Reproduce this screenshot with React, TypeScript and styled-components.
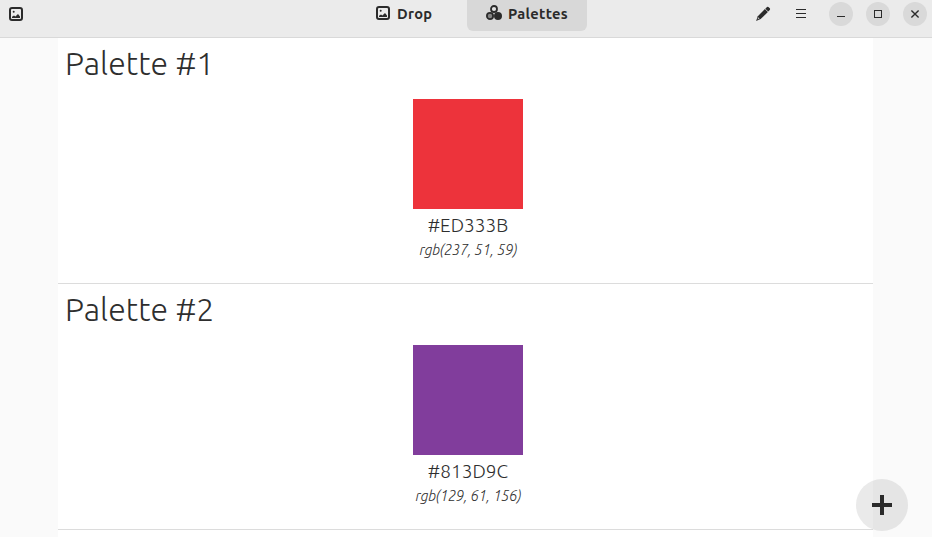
import React from 'react';
import styled, { createGlobalStyle } from 'styled-components';

const GlobalStyle = createGlobalStyle`
  * { box-sizing: border-box; }
  body {
    margin: 0;
    overflow: hidden;
    background: #fafafa;
    color: #2e2e2e;
    font-family: Ubuntu, "Open Sans", "Noto Sans", sans-serif;
  }
`;

const Window = styled.div`
  height: 537px;
  display: flex;
  flex-direction: column;
  overflow: hidden;
`;

const HeaderBar = styled.header`
  flex: none;
  height: 38px;
  display: grid;
  grid-template-columns: 347px 240px 1fr;
  align-items: start;
  background: #ebebeb;
  border-bottom: 1px solid #d9d9d9;
`;

const AppIcon = styled.div`
  display: flex;
  padding: 6px 8px;
`;

const Switcher = styled.nav`
  display: flex;
`;

const Tab = styled.button<{ $active?: boolean }>`
  width: 120px;
  height: 31px;
  display: flex;
  align-items: center;
  gap: 6px;
  border: 0;
  padding: 0 0 4px ${(p) => (p.$active ? 19 : 28)}px;
  border-radius: 0 0 6px 6px;
  background: ${(p) => (p.$active ? '#d8d8d8' : 'transparent')};
  color: #2b2b2b;
  font: 700 14.67px/20px Ubuntu, "Open Sans", "Noto Sans", sans-serif;
  letter-spacing: 0.3px;
  & > svg { margin-bottom: 2px; }
`;

const Actions = styled.div`
  display: flex;
  justify-content: flex-end;
  padding: 2px 5px 0 0;
`;

const ToolButton = styled.button`
  width: 24px;
  height: 24px;
  display: grid;
  place-items: center;
  border: 0;
  padding: 0;
  margin-right: 14px;
  background: transparent;
`;

const WindowButton = styled(ToolButton)`
  margin: 0 0 0 13px;
  border-radius: 50%;
  background: #d9d9d9;
  &:first-of-type { margin-left: 0; }
`;

const WindowControls = styled.div`
  display: flex;
  margin-left: 2px;
`;

const PaletteList = styled.main`
  flex: none;
  width: 815px;
  margin-left: 58px;
  height: 499px;
  overflow: hidden;
  background: #fff;
`;

const PaletteRow = styled.section`
  height: 246px;
  border-bottom: 1px solid #dcdcdc;
`;

const Title = styled.h2`
  margin: 0;
  padding: 4px 0 0 7px;
  height: 61px;
  font-size: 32px;
  font-weight: 300;
  line-height: 42px;
  letter-spacing: 0.06px;
`;

const ColorCard = styled.div`
  display: flex;
  flex-direction: column;
  align-items: center;
  padding-left: 5px;
`;

const Swatch = styled.div<{ $color: string }>`
  width: 110px;
  height: 110px;
  background: ${(p) => p.$color};
`;

const HexValue = styled.div`
  margin-top: 3px;
  font-size: 19px;
  font-weight: 300;
  line-height: 26px;
  letter-spacing: 0.05px;
  white-space: nowrap;
`;

const RgbValue = styled.div`
  margin-top: 1px;
  padding-left: 1px;
  font-size: 14.4px;
  font-style: italic;
  font-weight: 300;
  line-height: 22px;
  letter-spacing: -0.14px;
  white-space: nowrap;
`;

const AddButton = styled.button`
  position: absolute;
  left: 856px;
  top: 479px;
  width: 52px;
  height: 52px;
  display: grid;
  place-items: center;
  border: 0;
  padding: 0;
  border-radius: 50%;
  background: rgba(46, 46, 46, 0.1);
`;

const ImageIcon = () => (
  <svg width="16" height="16" viewBox="0 0 16 16" fill="#2b2b2b">
    <rect x="2" y="2" width="12" height="12" rx="2" fill="none" stroke="#2b2b2b" strokeWidth="2" />
    <circle cx="5.7" cy="5.8" r="1" />
    <path d="M4 12V10.8L6 9.4l1.4 1.2L10 8l2 2.4V12z" />
  </svg>
);

const PaletteIcon = () => (
  <svg width="16" height="16" viewBox="0 0 16 16" stroke="#2b2b2b" strokeWidth="1.8">
    <circle cx="8" cy="4" r="3" fill="#e2e2e2" />
    <circle cx="4" cy="11" r="3.1" fill="#858585" />
    <circle cx="12" cy="11" r="3.1" fill="#2b2b2b" />
  </svg>
);

const PencilIcon = () => (
  <svg width="16" height="16" viewBox="0 0 16 16" fill="#2b2b2b">
    <path d="M10.3 2.7 12 1.1Q12.9.4 13.7 1.2L14.8 2.3Q15.5 3.1 14.8 3.9L13.2 5.5z" />
    <path d="M9.9 3 12.9 6 5.7 13 1.1 15.1 2.8 10.2z" />
    <path d="M3.3 11.3 4.6 12.6 2.5 13.5z" fill="#bdbdbd" />
  </svg>
);

const palettes = [
  { name: 'Palette #1', hex: '#ED333B', rgb: 'rgb(237, 51, 59)' },
  { name: 'Palette #2', hex: '#813D9C', rgb: 'rgb(129, 61, 156)' },
];

export default function App() {
  return (
    <Window>
      <GlobalStyle />
      <HeaderBar>
        <AppIcon><ImageIcon /></AppIcon>
        <Switcher>
          <Tab><ImageIcon />Drop</Tab>
          <Tab $active><PaletteIcon />Palettes</Tab>
        </Switcher>
        <Actions>
          <ToolButton aria-label="Edit"><PencilIcon /></ToolButton>
          <ToolButton aria-label="Menu">
            <svg width="16" height="16" fill="#2b2b2b">
              <path d="M3 3h10v1H3zM3 7h10v1H3zM3 11h10v1H3z" />
            </svg>
          </ToolButton>
          <WindowControls>
            <WindowButton aria-label="Minimize">
              <svg width="16" height="16"><path d="M4 10h8v1H4z" fill="#2b2b2b" /></svg>
            </WindowButton>
            <WindowButton aria-label="Maximize">
              <svg width="16" height="16"><rect x="4.5" y="4.5" width="7" height="7" fill="none" stroke="#2b2b2b" /></svg>
            </WindowButton>
            <WindowButton aria-label="Close">
              <svg width="16" height="16"><path d="m4.4 4.4 7.2 7.2m0-7.2-7.2 7.2" stroke="#2b2b2b" strokeWidth="1.4" /></svg>
            </WindowButton>
          </WindowControls>
        </Actions>
      </HeaderBar>
      <PaletteList>
        {palettes.map((p) => (
          <PaletteRow key={p.hex}>
            <Title>{p.name}</Title>
            <ColorCard>
              <Swatch $color={p.hex} />
              <HexValue>{p.hex}</HexValue>
              <RgbValue>{p.rgb}</RgbValue>
            </ColorCard>
          </PaletteRow>
        ))}
      </PaletteList>
      <AddButton aria-label="Add palette">
        <svg width="20" height="20"><path d="M8 0h4v8h8v4h-8v8H8v-8H0V8h8z" fill="#2b2b2b" /></svg>
      </AddButton>
    </Window>
  );
}
